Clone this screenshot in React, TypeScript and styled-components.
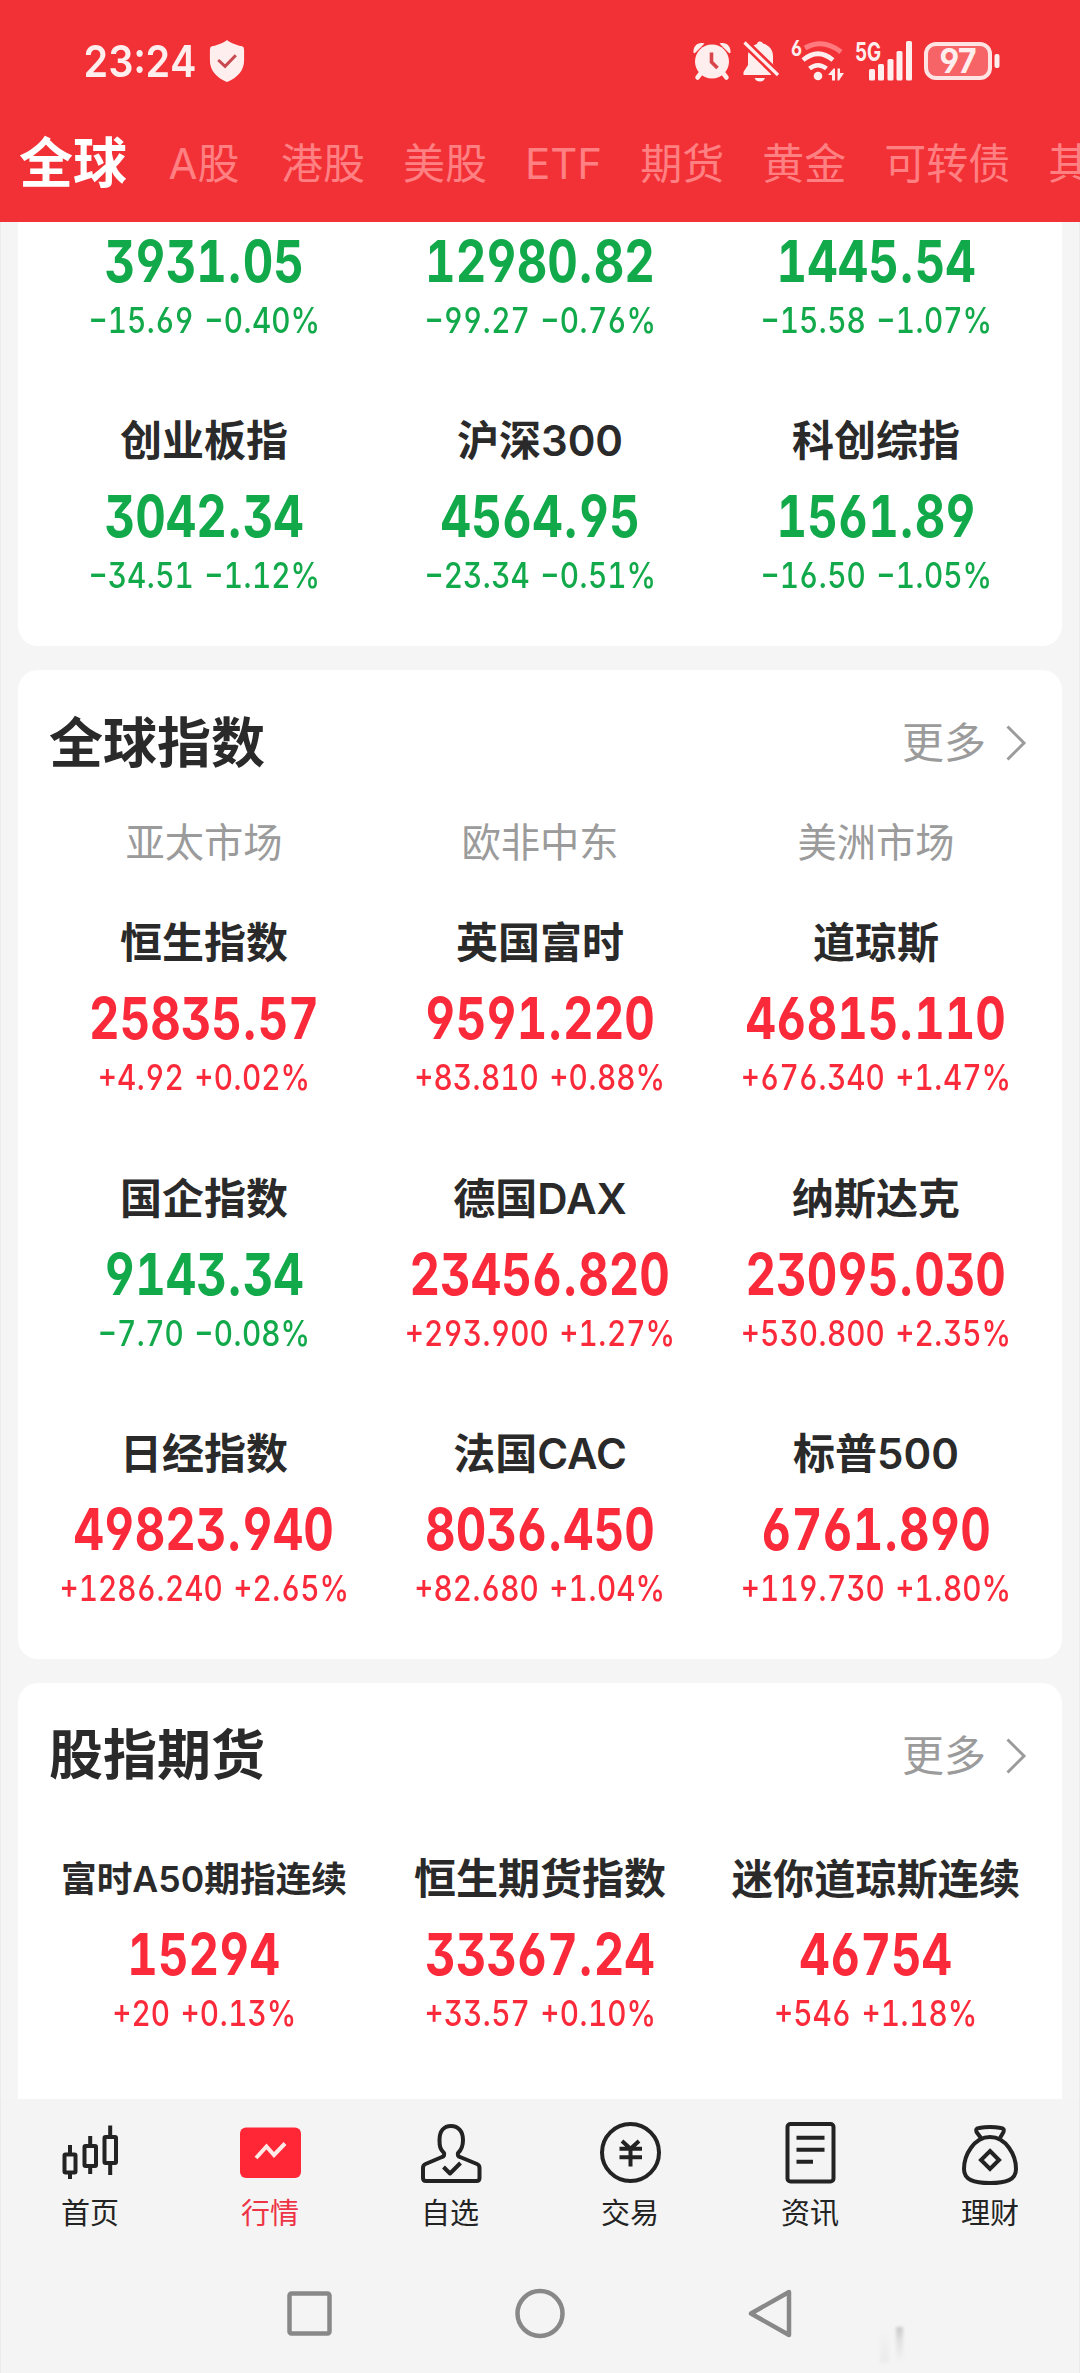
import React from 'react';
import styled, { createGlobalStyle } from 'styled-components';

const FONT = 'Inter, "Noto Sans CJK SC", sans-serif';
const UP = '#fb2a3a';
const DOWN = '#12a94b';

const Global = createGlobalStyle`
  *, *::before, *::after { box-sizing: border-box; }
  html, body { margin: 0; padding: 0; background: #f4f4f4; }
  body { font-family: ${FONT}; color: #2a2a2a; overflow: hidden; }
  svg { display: block; flex: none; overflow: visible; }
  svg text { font-family: Inter, sans-serif; font-weight: 700; font-feature-settings: 'cv03', 'cv04'; }
`;

const Screen = styled.div`
  position: relative;
  width: 1080px;
  height: 2373px;
  display: flex;
  flex-direction: column;
  overflow: hidden;
  background: #f5f5f5;
`;

const Header = styled.header`
  height: 222px;
  flex: none;
  background: #f23136;
  color: #fff;
  display: flex;
  flex-direction: column;
`;

const StatusBar = styled.div`
  height: 122px;
  padding: 0 80px 0 83px;
  display: flex;
  align-items: center;
  justify-content: space-between;
`;

const StatusGroup = styled.div<{ $gap?: number }>`
  display: flex;
  align-items: center;
  gap: ${(p) => p.$gap ?? 12}px;
`;

const Clock = styled.span`
  width: 112px;
  font-size: 44px;
  font-weight: 600;
  line-height: 60px;
  font-feature-settings: 'tnum';
  white-space: nowrap;
  color: #ffeeee;
`;

const Squeeze = styled.span<{ $scale: number; $origin?: string }>`
  display: inline-block;
  transform: scaleX(${(p) => p.$scale});
  transform-origin: ${(p) => p.$origin ?? 'center'};
`;

const Tabs = styled.nav`
  height: 84px;
  display: flex;
  align-items: center;
  gap: 38px;
  padding-left: 19px;
  overflow: hidden;
  white-space: nowrap;
`;

const Tab = styled.span<{ $active?: boolean }>`
  flex: none;
  font-size: ${(p) => (p.$active ? 54 : 42)}px;
  font-weight: ${(p) => (p.$active ? 700 : 400)};
  line-height: 76px;
  color: ${(p) => (p.$active ? '#fff' : '#ff8083')};

  &:nth-child(-n + 2) { margin-right: 3.5px; }
`;

const Main = styled.main`
  height: 1877px;
  flex: none;
  overflow: hidden;
  padding: 0 18px;
  display: flex;
  flex-direction: column;
  gap: 24px;
  box-shadow: inset 1px 0 #ebebeb, inset -1px 0 #ebebeb;
`;

const Card = styled.section<{ $edge?: 'top' | 'bottom' }>`
  flex: ${(p) => (p.$edge === 'bottom' ? '1 0 auto' : 'none')};
  background: #fff;
  border-radius: ${(p) => (p.$edge === 'top' ? '0 0 20px 20px' : p.$edge === 'bottom' ? '20px 20px 0 0' : '20px')};
  padding: 0 18px 52px;
  margin-top: ${(p) => (p.$edge === 'top' ? -1 : 0)}px;
`;

const CardHead = styled.div`
  height: 145px;
  padding: 1px 18px 0 13px;
  display: flex;
  align-items: center;
  justify-content: space-between;
`;

const CardTitle = styled.h2`
  margin: 0;
  padding-top: 1px;
  font-size: 54px;
  line-height: 80px;
  font-weight: 700;
`;

const More = styled.span`
  display: flex;
  align-items: center;
  gap: 20px;
  font-size: 42px;
  line-height: 60px;
  font-weight: 400;
  color: #9b9b9b;
`;

const Regions = styled.div`
  display: grid;
  grid-template-columns: repeat(3, minmax(0, 1fr));
  height: 56px;
  line-height: 56px;
  font-size: 39.3px;
  color: #9b9b9b;
  text-align: center;
`;

const Quotes = styled.div<{ $top: number }>`
  display: grid;
  grid-template-columns: repeat(3, minmax(0, 1fr));
  row-gap: 67.3px;
  padding-top: ${(p) => p.$top}px;
`;

const Cell = styled.div<{ $up: boolean }>`
  display: flex;
  flex-direction: column;
  align-items: center;
  white-space: nowrap;
  color: ${(p) => (p.$up ? UP : DOWN)};
`;

const Name = styled.div<{ $size: number }>`
  height: 70px;
  line-height: 70px;
  font-size: ${(p) => p.$size}px;
  font-weight: 600;
  color: #2a2a2a;
`;

const Price = styled.div`
  height: 81px;
  font-size: 58px;
  font-weight: 670;
  line-height: 81px;
  font-feature-settings: 'tnum', 'cv03', 'cv04', 'cv09';
`;

const Change = styled.div`
  height: 37px;
  font-size: 35px;
  font-weight: 500;
  line-height: 37px;
  word-spacing: 3px;
  font-feature-settings: 'tnum', 'cv03', 'cv04', 'cv09';
`;

const Narrow = styled.span`
  font-feature-settings: 'tnum' 0;
`;

const BottomNav = styled.nav`
  height: 149px;
  flex: none;
  background: #f4f4f4;
  display: grid;
  grid-template-columns: repeat(6, 1fr);
  padding-top: 21px;
  box-shadow: inset 1px 0 #ebebeb, inset -1px 0 #ebebeb;
`;

const NavItem = styled.div<{ $active?: boolean }>`
  display: flex;
  flex-direction: column;
  align-items: center;
  font-size: 29px;
  line-height: 44px;
  gap: 4px;
  color: ${(p) => (p.$active ? '#ee3344' : '#232323')};
`;

const SystemNav = styled.div`
  height: 125px;
  flex: none;
  background: #f4f4f4;
  display: flex;
  justify-content: center;
  gap: 178px;
  padding: 39px 0 0;
  box-shadow: inset 1px 0 #ebebeb, inset -1px 0 #ebebeb;
`;

const Smudge = styled.div`
  position: absolute;
  right: 176px;
  bottom: 10px;
  width: 24px;
  height: 36px;
  display: flex;
  gap: 7px;
  filter: blur(1.5px);

  &::before {
    content: '';
    width: 9px;
    background: linear-gradient(#f4f4f4, #ebebeb);
  }

  &::after {
    content: '';
    width: 7px;
    background: linear-gradient(#c8c8c8, #e2e2e2 40%, #f4f4f4);
  }
`;

type Quote = { name?: string; price: string; change: string; size?: number };

const domestic: Quote[] = [
  { price: '3931.05', change: '−15.69 −0.40%' },
  { price: '12980.82', change: '−99.27 −0.76%' },
  { price: '1445.54', change: '−15.58 −1.07%' },
  { name: '创业板指', price: '3042.34', change: '−34.51 −1.12%' },
  { name: '沪深300', price: '4564.95', change: '−23.34 −0.51%' },
  { name: '科创综指', price: '1561.89', change: '−16.50 −1.05%' },
];

const world: Quote[] = [
  { name: '恒生指数', price: '25835.57', change: '+4.92 +0.02%' },
  { name: '英国富时', price: '9591.220', change: '+83.810 +0.88%' },
  { name: '道琼斯', price: '46815.110', change: '+676.340 +1.47%' },
  { name: '国企指数', price: '9143.34', change: '−7.70 −0.08%' },
  { name: '德国DAX', price: '23456.820', change: '+293.900 +1.27%' },
  { name: '纳斯达克', price: '23095.030', change: '+530.800 +2.35%' },
  { name: '日经指数', price: '49823.940', change: '+1286.240 +2.65%' },
  { name: '法国CAC', price: '8036.450', change: '+82.680 +1.04%' },
  { name: '标普500', price: '6761.890', change: '+119.730 +1.80%' },
];

const futures: Quote[] = [
  { name: '富时A50期指连续', price: '15294', change: '+20 +0.13%', size: 35.7 },
  { name: '恒生期货指数', price: '33367.24', change: '+33.57 +0.10%' },
  { name: '迷你道琼斯连续', price: '46754', change: '+546 +1.18%', size: 41.2 },
];

function Digits({ text, scale }: { text: string; scale: number }) {
  return (
    <Squeeze $scale={scale}>
      {text.split(/([. ])/).map((part, i) => (part === '.' || part === ' ' ? <Narrow key={i}>{part}</Narrow> : part))}
    </Squeeze>
  );
}

function QuoteGrid({ items, top }: { items: Quote[]; top: number }) {
  return (
    <Quotes $top={top}>
      {items.map((q) => (
        <Cell key={q.price} $up={q.change.startsWith('+')}>
          {q.name && <Name $size={q.size ?? 42}>{q.name}</Name>}
          <Price><Digits text={q.price} scale={0.815} /></Price>
          <Change><Digits text={q.change} scale={0.85} /></Change>
        </Cell>
      ))}
    </Quotes>
  );
}

function SectionHead({ title }: { title: string }) {
  return (
    <CardHead>
      <CardTitle>{title}</CardTitle>
      <More>
        更多
        <svg width="20" height="36" viewBox="0 0 20 36" fill="none" stroke="#9b9b9b" strokeWidth="3">
          <path d="M1.500 1.500 18 18 1.500 34.500" />
        </svg>
      </More>
    </CardHead>
  );
}

const Shield = () => (
  <svg width="36" height="42" viewBox="0 0 36 43">
    <path d="M18 0C14 3.500 7 5.500 2.500 6.500Q.5 7 .5 10V21C.5 31 7 38.500 18 43 29 38.500 35.500 31 35.500 21V10Q35.500 7 33.500 6.500C29 5.500 22 3.500 18 0Z" fill="#ffeeee" />
    <path d="M9 20.500 16 27 27 15.500" fill="none" stroke="#c84a50" strokeWidth="3" />
  </svg>
);

const Alarm = () => (
  <svg width="38" height="38" viewBox="0 0 38 38" fill="#ffeeee">
    <path d="M.5 10.500C0 4 5 -.5 11.500 1.500L2.500 10.500Q1 12 .5 10.500ZM37.500 10.500C38 4 33 -.5 26.500 1.500L35.500 10.500Q37 12 37.500 10.500Z" />
    <circle cx="19" cy="19.500" r="17" />
    <path d="M8 31 4.500 35.500M30 31 33.500 35.500" stroke="#ffeeee" strokeWidth="4.500" strokeLinecap="round" />
    <path d="M18.500 10.500V20L24.500 26" fill="none" stroke="#d8454b" strokeWidth="3.600" />
  </svg>
);

const BellOff = () => (
  <svg width="36" height="40" viewBox="0 0 36 40" fill="#ffeeee">
    <path d="M16 .5Q19 0 20 2.500C26.500 4.500 30 9 30 15V23L31 25V34H0.500V31L5 24V15C5 9 8 5 14 3Q14 1 16 .5Z" />
    <path d="M11.500 37H22Q21 40.500 17 40.500T11.500 37Z" />
    <path d="M0 0 36 35" stroke="#f23136" strokeWidth="8.500" />
    <path d="M28 31H33V36H28Z" fill="#f23136" />
    <path d="M1.500 1.500 35 34" stroke="#ffeeee" strokeWidth="3.200" />
  </svg>
);

const Wifi = () => (
  <svg width="52" height="42" viewBox="0 0 52 42" fill="none">
    <text x="0" y="16" fontSize="21" fill="#ffeeee" textLength="11" lengthAdjust="spacingAndGlyphs">6</text>
    <path d="M14 8Q32 -2 50 12" stroke="#ff7a7e" strokeWidth="5" />
    <path d="M12 20Q27 7.500 42 20M18.500 28.500Q27 22 35.500 28.500" stroke="#ffeeee" strokeWidth="4.600" />
    <circle cx="27" cy="36" r="4.300" fill="#ffeeee" />
    <path d="M37 35 42.500 28.500H44V40.500H41V35ZM46.500 28.500H49V33H53L48 40.500H46.500Z" fill="#ffeeee" />
  </svg>
);

const Signal = () => (
  <svg width="57" height="40" viewBox="0 0 57 40" fill="#ffeeee">
    <text x="0" y="19.500" fontSize="25" textLength="26" lengthAdjust="spacingAndGlyphs">5G</text>
    <rect x="14" y="28" width="6" height="11.500" rx="1.500" />
    <rect x="23" y="23" width="6" height="16.500" rx="1.500" />
    <rect x="32.500" y="18" width="6" height="21.500" rx="1.500" />
    <rect x="41.500" y="10" width="6" height="29.500" rx="1.500" />
    <rect x="51" y="0" width="6" height="39.500" rx="1.500" />
  </svg>
);

const Battery = () => (
  <svg width="76" height="38" viewBox="0 0 76 38">
    <rect x="2" y="2" width="64" height="34" rx="10" fill="#f76468" stroke="#ffe4e4" strokeWidth="4" />
    <rect x="70.500" y="12" width="5" height="14" rx="2" fill="#ffeeee" />
    <text x="34" y="31" fontSize="34" fill="#ffeeee" textAnchor="middle" textLength="37" lengthAdjust="spacingAndGlyphs">97</text>
  </svg>
);

const icon = { width: 68, height: 68, viewBox: '0 0 68 68', fill: 'none', stroke: '#232323', strokeWidth: 4 };

const HomeIcon = () => (
  <svg {...icon}>
    <rect x="8.500" y="34.500" width="11" height="18" rx="1" />
    <rect x="28.500" y="26" width="11.500" height="20" rx="1" />
    <rect x="48.500" y="17" width="11.500" height="26" rx="1" />
    <path d="M14 25V34M14 53V59M34.200 16V25M34.200 46V54M54.200 5.500V16M54.200 44V55" />
  </svg>
);
const MarketIcon = () => (
  <svg {...icon}>
    <rect x="4" y="7.500" width="61" height="50.500" rx="6" fill="#ff2636" stroke="none" />
    <path d="M20 38 30.500 26.500 38 35 49 23.500" stroke="#ffe9e6" />
  </svg>
);
const UserIcon = () => (
  <svg {...icon} strokeLinejoin="round">
    <path d="M28 33C24 29.500 23.500 26 23.500 20 23.500 11 28 6 35 6S47 11 47 20C47 26 46 29.500 42 33Q41 36 44 37L61 44Q63.500 45 63.500 48V58Q63.500 61 60.500 61H10Q7 61 7 58V48Q7 45 9.500 44L26 37Q29 36 28 33Z" />
    <path d="M27.500 47 34 53.500 44.500 43" />
  </svg>
);
const TradeIcon = () => (
  <svg {...icon}>
    <circle cx="34.500" cy="32.500" r="28.500" />
    <path d="M26 21 34.500 28.700 43 21M23.500 28.700H46M23.500 37.300H46M34.500 28.700V46.500" />
  </svg>
);
const NewsIcon = () => (
  <svg {...icon}>
    <rect x="11.500" y="4" width="46" height="57.500" rx="3" />
    <path d="M20.500 17.700H48.500M20.500 29.700H48.500M20.500 41.700H37" />
  </svg>
);
const WealthIcon = () => (
  <svg {...icon} strokeLinejoin="round">
    <path d="M25 18 20.500 12Q19 8.500 23 8 34 6 45 8 49 8.500 47.500 12L44 18" />
    <path d="M34 17C18 17 8 35 8 49 8 60 18 63 34 63S60 60 60 49C60 35 50 17 34 17Z" />
    <path d="M34 31 43 40 34 49 25 40Z" strokeLinejoin="miter" />
  </svg>
);

const navItems = [
  { label: '首页', Icon: HomeIcon },
  { label: '行情', Icon: MarketIcon, active: true },
  { label: '自选', Icon: UserIcon },
  { label: '交易', Icon: TradeIcon },
  { label: '资讯', Icon: NewsIcon },
  { label: '理财', Icon: WealthIcon },
];

const sys = { width: 52, height: 52, viewBox: '0 0 52 52', fill: 'none', stroke: '#888', strokeWidth: 4.5 };

export default function App() {
  return (
    <Screen>
      <Global />
      <Header>
        <StatusBar>
          <StatusGroup $gap={14}>
            <Clock><Squeeze $scale={0.9} $origin="left">23:24</Squeeze></Clock>
            <Shield />
          </StatusGroup>
          <StatusGroup>
            <Alarm />
            <BellOff />
            <Wifi />
            <Signal />
            <Battery />
          </StatusGroup>
        </StatusBar>
        <Tabs>
          <Tab $active>全球</Tab>
          {['A股', '港股', '美股', 'ETF', '期货', '黄金', '可转债', '其他'].map((t) => <Tab key={t}>{t}</Tab>)}
        </Tabs>
      </Header>
      <Main>
        <Card $edge="top">
          <QuoteGrid items={domestic} top={0} />
        </Card>
        <Card>
          <SectionHead title="全球指数" />
          <Regions>
            <span>亚太市场</span>
            <span>欧非中东</span>
            <span>美洲市场</span>
          </Regions>
          <QuoteGrid items={world} top={37} />
        </Card>
        <Card $edge="bottom">
          <SectionHead title="股指期货" />
          <QuoteGrid items={futures} top={16} />
        </Card>
      </Main>
      <BottomNav>
        {navItems.map(({ label, Icon, active }) => (
          <NavItem key={label} $active={active}>
            <Icon />
            {label}
          </NavItem>
        ))}
      </BottomNav>
      <SystemNav>
        <svg {...sys}><rect x="5.500" y="6.500" width="40" height="40" rx="2" /></svg>
        <svg {...sys}><circle cx="26" cy="26.500" r="22.500" /></svg>
        <svg {...sys} strokeLinejoin="round"><path d="M45 5V48L7 26.500Z" /></svg>
      </SystemNav>
      <Smudge />
    </Screen>
  );
}
